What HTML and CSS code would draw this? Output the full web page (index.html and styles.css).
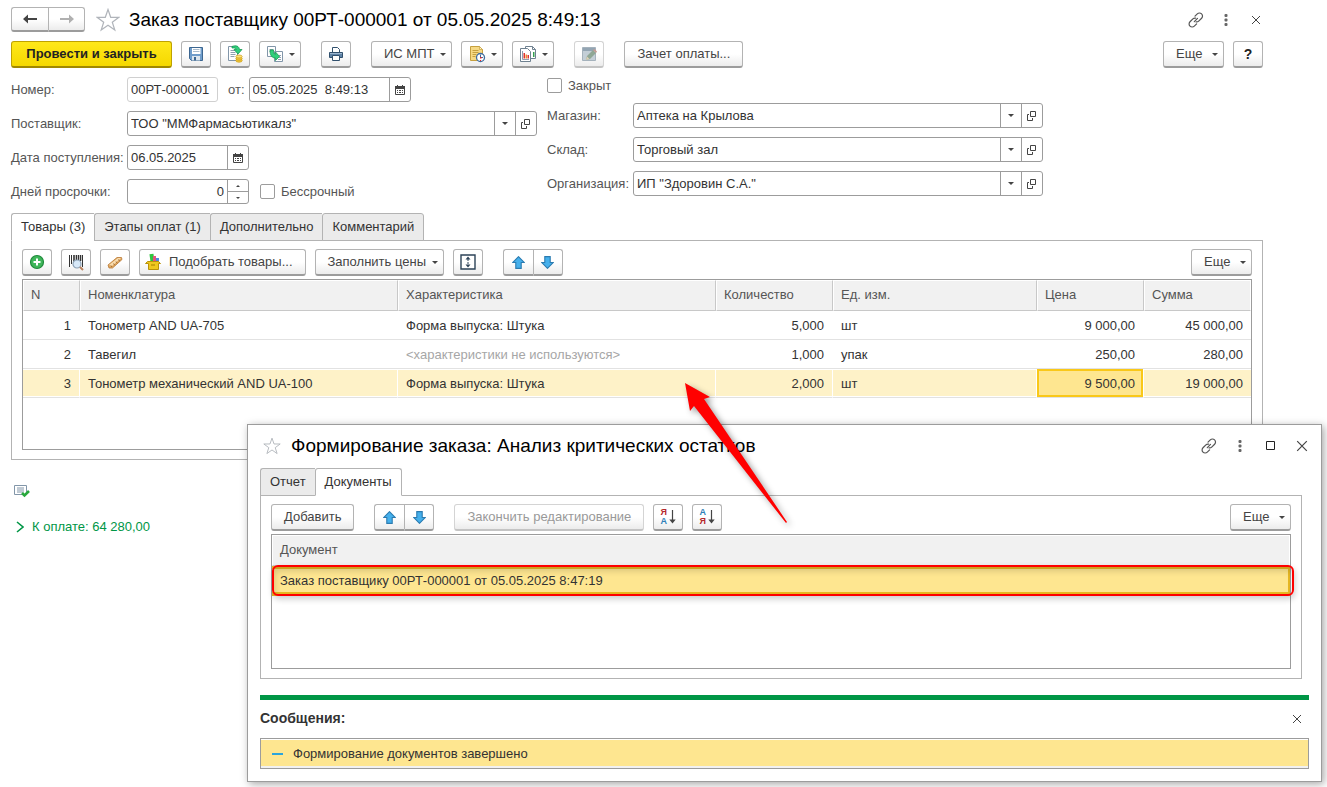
FILE: index.html
```html
<!DOCTYPE html>
<html lang="ru">
<head>
	<meta charset="UTF-8">
	<title>Заказ поставщику</title>
	<link rel="stylesheet" href="styles.css">
</head>
<body>
	<svg class="sprite" aria-hidden="true">
		<symbol id="i-star" viewBox="0 0 24 24"><path d="M12 1.500l2.700 7.800h8.200l-6.600 4.900 2.500 7.900-6.800-4.800-6.800 4.800 2.500-7.900-6.600-4.900h8.200z" fill="#fff" stroke="#b0b4ba" stroke-width="1.200"/></symbol>
		<symbol id="i-link" viewBox="0 0 16 16"><g fill="none" stroke="#555" stroke-width="1.200" stroke-linecap="round"><path d="M7 4.200l2.300-2.300a3 3 0 0 1 4.300 0 3 3 0 0 1 0 4.300l-2.900 2.900a3 3 0 0 1-2.700.8"/><path d="M8.600 11.800l-2.300 2.300a3 3 0 0 1-4.300 0 3 3 0 0 1 0-4.300l2.900-2.900a3 3 0 0 1 2.700-.8"/><path d="M6.300 9.700l3.200-3.300"/></g></symbol>
		<symbol id="i-dots" viewBox="0 0 4 12"><rect x=".5" width="3" height="3" rx="1" fill="#666"/><rect x=".5" y="4.500" width="3" height="3" rx="1" fill="#666"/><rect x=".5" y="9" width="3" height="3" rx="1" fill="#666"/></symbol>
		<symbol id="i-close" viewBox="0 0 10 10"><path d="M1 1l8 8M9 1l-8 8" stroke="#444" fill="none"/></symbol>
		<symbol id="i-cal" viewBox="0 0 10 10"><path d="M.5 1.500h9v8h-9z" fill="#fff" stroke="#444"/><path d="M0 1h10v3H0z" fill="#444"/><path d="M2 0h1v2H2zM7 0h1v2H7z" fill="#444"/><path d="M2 5h1v1H2zM4 5h2v1H4zM7 5h1v1H7zM2 7h1v1H2zM4 7h2v1H4zM7 7h1v1H7z" fill="#444"/></symbol>
		<symbol id="i-open" viewBox="0 0 10 10"><path d="M3.500 .5h5v5h-5z" fill="none" stroke="#444"/><path d="M2 3.500H.5v6h5V7" fill="none" stroke="#444"/></symbol>
		<symbol id="i-up" viewBox="0 0 12 12"><path d="M6 .6L11.400 6H8.500v5.400h-5V6H.6z" fill="#45b0ec" stroke="#2b7bb0"/></symbol>
		<symbol id="i-down" viewBox="0 0 12 12"><path d="M6 11.400L.6 6h2.900V.6h5V6h2.900z" fill="#45b0ec" stroke="#2b7bb0"/></symbol>
	</svg>

	<div class="page">
		<div class="title-bar">
			<div class="pair">
				<button class="btn" aria-label="Назад"><svg width="14" height="10" viewBox="0 0 14 10"><path d="M0 5l5-4.500V4h9v2H5v3.500z" fill="#444"/></svg></button>
				<button class="btn" aria-label="Вперед"><svg width="14" height="10" viewBox="0 0 14 10"><path d="M14 5L9 .5V4H0v2h9v3.500z" fill="#b0b0b0"/></svg></button>
			</div>
			<svg class="star" width="24" height="24"><use href="#i-star"/></svg>
			<h1>Заказ поставщику 00РТ-000001 от 05.05.2025 8:49:13</h1>
			<div class="win-tools">
				<button class="plain" aria-label="Ссылка"><svg width="16" height="16"><use href="#i-link"/></svg></button>
				<button class="plain" aria-label="Меню"><svg width="4" height="12"><use href="#i-dots"/></svg></button>
				<button class="plain" aria-label="Закрыть"><svg width="10" height="10"><use href="#i-close"/></svg></button>
			</div>
		</div>

		<div class="toolbar">
			<button class="btn main">Провести и закрыть</button>
			<button class="btn icon" aria-label="Записать"><svg width="16" height="16" viewBox="0 0 16 16"><path d="M1.500 1.500h13v13h-11l-2-2z" fill="#6f9dcb" stroke="#3c6690"/><path d="M4 2h8.500v6H4z" fill="#fff"/><path d="M5 3.500h6.500M5 5.500h6.500" stroke="#a9bccd"/><path d="M4 10h8v4.500H4z" fill="#dce6ee"/><path d="M6 11h2v3.500H6z" fill="#3c6690"/></svg></button>
			<button class="btn icon" aria-label="Провести"><svg width="18" height="18" viewBox="0 0 18 18"><path d="M2.500 1.500h9v14h-9z" fill="#fff" stroke="#8296a9"/><path d="M4.500 5.500h5M4.500 7.500h5M4.500 9.500h5M4.500 11.500h4" stroke="#8fa0b0"/><path d="M6 1.500c4-1.500 7-.5 7.500 3H16l-4 4.500-4-4.500h2.500C10 3 8.500 2.800 6 3z" fill="#2fcf7b" stroke="#189a53" stroke-width=".8"/><ellipse cx="13" cy="15.500" rx="3.200" ry="1.700" fill="#f2c93f" stroke="#c99a12" stroke-width=".7"/><ellipse cx="13" cy="13.500" rx="3.200" ry="1.700" fill="#f2c93f" stroke="#c99a12" stroke-width=".7"/><ellipse cx="13" cy="11.500" rx="3.200" ry="1.500" fill="#ffe27a" stroke="#c99a12" stroke-width=".7"/></svg></button>
			<button class="btn icon wide" aria-label="Создать на основании"><svg width="18" height="18" viewBox="0 0 18 18"><path d="M1.500 1.500h8v10h-8z" fill="#fff" stroke="#8296a9"/><path d="M3.500 4.500h4M3.500 6.500h2" stroke="#8fa0b0"/><path d="M8.500 6.500h8v10h-8z" fill="#fff" stroke="#8296a9"/><path d="M13 10.500h2M13 12.500h2M12 14.500h3" stroke="#8fa0b0"/><path d="M4 5h3.500c0 3 .5 4 2 4.500V7l4 4.500-4 4V13C6 13 4 10.500 4 5z" fill="#2fcf7b" stroke="#189a53" stroke-width=".8"/></svg><i class="caret"></i></button>
			<span class="space"></span>
			<button class="btn icon" aria-label="Печать"><svg width="16" height="16" viewBox="0 0 16 16"><path d="M4.500 6V1.500h5l2 2V6" fill="#fff" stroke="#31506d"/><path d="M1.500 6.500h13v5h-13z" fill="#5f83a6" stroke="#31506d"/><path d="M2 7h12v1H2z" fill="#9bb6cf"/><path d="M4.500 9.500h7v5h-7z" fill="#fff" stroke="#31506d"/></svg></button>
			<span class="space"></span>
			<button class="btn drop">ИС МПТ<i class="caret"></i></button>
			<button class="btn icon wide" aria-label="Отложить"><svg width="18" height="18" viewBox="0 0 18 18"><path d="M2.500 1.500h9l3 3v11h-12z" fill="#f6d984" stroke="#c6a03f"/><path d="M11.500 1.500v3h3z" fill="#fff3c9" stroke="#c6a03f" stroke-width=".7"/><path d="M4.500 5.500h6M4.500 7.500h6M4.500 9.500h4M4.500 11.500h3" stroke="#c6a03f"/><circle cx="12.500" cy="12.500" r="4" fill="#fff" stroke="#3f6c9e" stroke-width="1.300"/><path d="M12.500 9.500v3h2.500" fill="none" stroke="#3f6c9e"/><path d="M12 12h1.500v1.500H12zM12 15h1v1h-1z" fill="#e22"/></svg><i class="caret"></i></button>
			<button class="btn icon wide" aria-label="Отчеты"><svg width="18" height="18" viewBox="0 0 18 18"><path d="M6.500 1.500h7l3 3v9h-10z" fill="#fff" stroke="#6f8190"/><path d="M13.500 1.500v3h3" fill="none" stroke="#6f8190"/><path d="M14 7h1.500v5H14z" fill="#35a04f"/><path d="M1.500 3.500h7l3 3v10h-10z" fill="#fff" stroke="#6f8190"/><path d="M3.500 6v8.500h6.500" fill="none" stroke="#8fa0b0"/><path d="M4.500 8H6v5.500H4.500zM8.500 10H10v3.500H8.500z" fill="#e0342d"/><path d="M6.500 9.500H8v4H6.500z" fill="#eb8b34"/></svg><i class="caret"></i></button>
			<span class="space"></span>
			<button class="btn icon off" disabled aria-label="Изменить"><svg width="16" height="16" viewBox="0 0 16 16"><path d="M1.500 1.500h13v13h-13z" fill="#c3ced6" stroke="#a5b2bc"/><path d="M2 2h12v3H2z" fill="#93a5b3"/><path d="M5 14l1-4 6-6 3 3-6 6z" fill="#8fa795"/><path d="M12 4l3 3 1-1.500L13.500 3z" fill="#c79a92"/><path d="M5 14l1-3.500L8.500 13z" fill="#ddd0b5"/></svg></button>
			<span class="space"></span>
			<button class="btn">Зачет оплаты...</button>
			<span class="grow"></span>
			<button class="btn drop">Еще<i class="caret"></i></button>
			<button class="btn icon help">?</button>
		</div>

		<div class="fields">
			<div class="col">
				<div class="row">
					<label class="name" for="num">Номер:</label>
					<div class="box num"><input id="num" value="00РТ-000001"></div>
					<label class="from" for="date">от:</label>
					<div class="box date"><input id="date" value="05.05.2025  8:49:13"><button aria-label="Календарь"><svg width="10" height="10"><use href="#i-cal"/></svg></button></div>
				</div>
				<div class="row">
					<label class="name" for="supplier">Поставщик:</label>
					<div class="box full"><select id="supplier"><option>ТОО "ММФармасьютикалз"</option></select><span class="arrow"><i class="caret"></i></span><button aria-label="Открыть"><svg width="10" height="10"><use href="#i-open"/></svg></button></div>
				</div>
				<div class="row">
					<label class="name" for="income">Дата поступления:</label>
					<div class="box short"><input id="income" value="06.05.2025"><button aria-label="Календарь"><svg width="10" height="10"><use href="#i-cal"/></svg></button></div>
				</div>
				<div class="row">
					<label class="name" for="days">Дней просрочки:</label>
					<div class="box short"><input id="days" class="right" type="number" value="0"><div class="spin"><button aria-label="Больше"><i class="caret up"></i></button><button aria-label="Меньше"><i class="caret"></i></button></div></div>
					<label class="check"><input type="checkbox">Бессрочный</label>
				</div>
			</div>
			<div class="col side">
				<label class="check"><input type="checkbox">Закрыт</label>
				<div class="row">
					<label class="name" for="shop">Магазин:</label>
					<div class="box full"><select id="shop"><option>Аптека на Крылова</option></select><span class="arrow"><i class="caret"></i></span><button aria-label="Открыть"><svg width="10" height="10"><use href="#i-open"/></svg></button></div>
				</div>
				<div class="row">
					<label class="name" for="store">Склад:</label>
					<div class="box full"><select id="store"><option>Торговый зал</option></select><span class="arrow"><i class="caret"></i></span><button aria-label="Открыть"><svg width="10" height="10"><use href="#i-open"/></svg></button></div>
				</div>
				<div class="row">
					<label class="name" for="org">Организация:</label>
					<div class="box full"><select id="org"><option>ИП "Здоровин С.А."</option></select><span class="arrow"><i class="caret"></i></span><button aria-label="Открыть"><svg width="10" height="10"><use href="#i-open"/></svg></button></div>
				</div>
			</div>
		</div>

		<div class="tabs">
			<button class="on">Товары (3)</button>
			<button>Этапы оплат (1)</button>
			<button>Дополнительно</button>
			<button>Комментарий</button>
		</div>
		<div class="panel">
			<div class="toolbar">
				<button class="btn icon" aria-label="Добавить"><svg width="16" height="16" viewBox="0 0 16 16"><circle cx="8" cy="8" r="6.500" fill="#3fb65a" stroke="#1f8a3b" stroke-width="1.200"/><path d="M7 4.500h2V7h2.500v2H9v2.500H7V9H4.500V7H7z" fill="#fff"/></svg></button>
				<button class="btn icon" aria-label="Поиск по штрихкоду"><svg width="18" height="18" viewBox="0 0 18 18"><path d="M2.500 2v12M4.500 2v9M11.500 2v5M15.500 2v12" stroke="#333"/><path d="M7 2v8M9.500 2v5M13.500 2v6" stroke="#333" stroke-width="1.600"/><circle cx="10" cy="11" r="4" fill="#d7e8f8" stroke="#8da2b6" stroke-width="1.200"/><path d="M13 14l3 3" stroke="#b9825e" stroke-width="2"/></svg></button>
				<button class="btn icon" aria-label="Терминал"><svg width="18" height="18" viewBox="0 0 18 18"><path d="M2 12L11 4.500h4.500l.5 2L6.500 15H3z" fill="#e0a860" stroke="#b97835" stroke-width=".8"/><path d="M3 12L12 5h3L6 13z" fill="#f9ddb0"/><path d="M5 12.500l1 1.500M7.500 10.500l1.200 1.700M10 8.500l1.200 1.700M12.500 6.500l1.200 1.700" stroke="#8d5a27" stroke-width=".8"/></svg></button>
				<button class="btn"><svg class="before" width="18" height="18" viewBox="0 0 18 18"><path d="M5 1h4v8H5z" fill="#2fc43f" transform="rotate(-8 7 5)"/><path d="M8 3h3v6H8z" fill="#e0547f"/><path d="M11 5h3v4h-3z" fill="#4f87dc"/><path d="M2.500 8.500h11l2 2h-2v6h-10v-6h-3z" fill="#efc81f" stroke="#b99209"/><path d="M6 12h4" stroke="#a27e00"/></svg>Подобрать товары...</button>
				<button class="btn drop">Заполнить цены<i class="caret"></i></button>
				<button class="btn icon" aria-label="Растянуть"><svg width="16" height="16" viewBox="0 0 16 16"><path d="M1 1h14v14H1z" fill="#fff" stroke="#2d4358" stroke-width="1.400"/><path d="M8 2.500L5.500 5.500h5zM8 13.500l-2.500-3h5z" fill="#2d4358"/><path d="M8 5v6" stroke="#2d4358" stroke-dasharray="2 1"/></svg></button>
				<span class="space"></span>
				<div class="pair">
					<button class="btn" aria-label="Вверх"><svg width="13" height="13"><use href="#i-up"/></svg></button>
					<button class="btn" aria-label="Вниз"><svg width="13" height="13"><use href="#i-down"/></svg></button>
				</div>
				<span class="grow"></span>
				<button class="btn drop">Еще<i class="caret"></i></button>
			</div>
			<div class="grid goods">
				<table>
					<colgroup><col class="c-n"><col><col><col class="c-qty"><col class="c-unit"><col class="c-sum"><col class="c-sum"></colgroup>
					<thead>
						<tr><th>N</th><th>Номенклатура</th><th>Характеристика</th><th>Количество</th><th>Ед. изм.</th><th>Цена</th><th>Сумма</th></tr>
					</thead>
					<tbody>
						<tr><td class="right">1</td><td>Тонометр AND UA-705</td><td>Форма выпуска: Штука</td><td class="right">5,000</td><td>шт</td><td class="right">9 000,00</td><td class="right">45 000,00</td></tr>
						<tr><td class="right">2</td><td>Тавегил</td><td class="muted">&lt;характеристики не используются&gt;</td><td class="right">1,000</td><td>упак</td><td class="right">250,00</td><td class="right">280,00</td></tr>
						<tr class="sel"><td class="right">3</td><td>Тонометр механический AND UA-100</td><td>Форма выпуска: Штука</td><td class="right">2,000</td><td>шт</td><td class="right cur">9 500,00</td><td class="right">19 000,00</td></tr>
					</tbody>
				</table>
			</div>
		</div>

		<div class="footer">
			<svg width="16" height="14" viewBox="0 0 16 14"><path d="M.5 1.500h12v9H.5z" fill="#fff" stroke="#8296a9"/><path d="M3 4h7M3 6h7M3 8h7" stroke="#8296a9"/><path d="M8 9l2.500 2.500L15 7" fill="none" stroke="#28a83c" stroke-width="2.600"/></svg>
			<a href="#"><svg width="8" height="12" viewBox="0 0 8 12"><path d="M1 1l6 5-6 5" fill="none" stroke="#009646" stroke-width="1.600"/></svg>К оплате: 64 280,00</a>
		</div>
	</div>

	<div class="window">
		<div class="title-bar">
			<svg class="star" width="18" height="18"><use href="#i-star"/></svg>
			<h2>Формирование заказа: Анализ критических остатков</h2>
			<div class="win-tools">
				<button class="plain" aria-label="Ссылка"><svg width="16" height="16"><use href="#i-link"/></svg></button>
				<button class="plain" aria-label="Меню"><svg width="4" height="12"><use href="#i-dots"/></svg></button>
				<button class="plain" aria-label="Развернуть"><svg width="9" height="9" viewBox="0 0 9 9"><path d="M.5 .5h8v8h-8z" fill="none" stroke="#222"/></svg></button>
				<button class="plain" aria-label="Закрыть"><svg width="12" height="12"><use href="#i-close"/></svg></button>
			</div>
		</div>
		<div class="tabs">
			<button>Отчет</button>
			<button class="on">Документы</button>
		</div>
		<div class="panel">
			<div class="toolbar">
				<button class="btn">Добавить</button>
				<span class="space"></span>
				<div class="pair">
					<button class="btn" aria-label="Вверх"><svg width="13" height="13"><use href="#i-up"/></svg></button>
					<button class="btn" aria-label="Вниз"><svg width="13" height="13"><use href="#i-down"/></svg></button>
				</div>
				<span class="space"></span>
				<button class="btn off" disabled>Закончить редактирование</button>
				<button class="btn icon" aria-label="По убыванию"><span class="letters"><b class="red">Я</b><b class="blue">А</b></span><svg width="7" height="14" viewBox="0 0 7 14"><path d="M3.500 0v11" stroke="#444" stroke-width="1.200"/><path d="M.3 9.500h6.400L3.500 13.500z" fill="#444"/></svg></button>
				<button class="btn icon" aria-label="По возрастанию"><span class="letters"><b class="blue">А</b><b class="red">Я</b></span><svg width="7" height="14" viewBox="0 0 7 14"><path d="M3.500 0v11" stroke="#444" stroke-width="1.200"/><path d="M.3 9.500h6.400L3.500 13.500z" fill="#444"/></svg></button>
				<span class="grow"></span>
				<button class="btn drop">Еще<i class="caret"></i></button>
			</div>
			<div class="grid docs">
				<table>
					<thead><tr><th>Документ</th></tr></thead>
					<tbody><tr><td class="doc">Заказ поставщику 00РТ-000001 от 05.05.2025 8:47:19<span class="mark"></span></td></tr></tbody>
				</table>
			</div>
		</div>
		<div class="messages">
			<div class="head"><b>Сообщения:</b><button class="plain" aria-label="Закрыть"><svg width="10" height="10"><use href="#i-close"/></svg></button></div>
			<div class="msg">Формирование документов завершено</div>
		</div>
	</div>

	<svg class="pointer" width="120" height="160" viewBox="0 0 120 160"><path d="M5 3l25 14-6 2 83 123-1 1L14 26l-4 5z" fill="#f00"/></svg>
</body>
</html>
```
FILE: styles.css
```css
*{
	box-sizing:border-box;
	margin:0;
	padding:0;
}
body{
	position:relative;
	min-height:100vh;
	font:13px/16px "Liberation Sans", Arial, sans-serif;
	color:#333;
	background:#fff;
}
button,input,select{
	font:inherit;
	color:inherit;
	border:0;
	background:none;
}
svg{
	flex:none;
}
.sprite{
	position:absolute;
	width:0;
	height:0;
}
.page{
	padding:7px 64px 0 11px;
}

/* title */
.title-bar{
	display:flex;
	align-items:center;
	height:25px;
}
.title-bar .star{
	margin:0 9px 0 11px;
}
h1,h2{
	font-size:19px;
	line-height:24px;
	font-weight:normal;
	color:#000;
}
.win-tools{
	display:flex;
	align-items:center;
	margin-left:auto;
}
.plain{
	display:flex;
	align-items:center;
	justify-content:center;
	width:30px;
	height:20px;
}
.page .win-tools{
	margin-right:-8px;
}

/* buttons */
.toolbar{
	display:flex;
	gap:9px;
	margin-top:9px;
}
.space{
	width:2px;
}
.grow{
	flex:1;
}
.btn{
	display:flex;
	align-items:center;
	justify-content:center;
	height:27px;
	padding:0 12px;
	border:1px solid #b3b3b3;
	border-bottom:2px solid #9c9c9c;
	border-radius:3px;
	background:linear-gradient(#fff 50%,#ececec);
	color:#444;
	white-space:nowrap;
}
.main{
	min-width:161px;
	border-color:#bfa200;
	border-bottom-color:#a08800;
	background:linear-gradient(#ffe81a,#f5d800);
	font-weight:bold;
	color:#222;
}
.icon{
	width:30px;
	padding:0;
}
.wide{
	width:42px;
	gap:5px;
}
.drop{
	justify-content:space-between;
	min-width:61px;
	padding:0 5px 0 12px;
	gap:6px;
}
.help{
	font-size:14px;
	font-weight:bold;
	color:#222;
}
.off{
	color:#999;
	border-color:#d4d4d4;
	border-bottom-color:#c4c4c4;
}
.before{
	margin:0 6px 0 -7px;
}
.caret{
	width:0;
	border:3px solid transparent;
	border-top-color:#444;
	border-bottom:0;
}
.caret.up{
	transform:rotate(180deg);
}
.pair{
	display:flex;
}
.pair .btn{
	width:30px;
	padding:0;
}
.pair .btn:first-child{
	border-right:0;
	border-radius:3px 0 0 3px;
}
.pair .btn:last-child{
	border-radius:0 3px 3px 0;
}
.title-bar .pair .btn{
	width:37px;
	height:25px;
}
.letters{
	display:flex;
	flex-direction:column;
	margin-right:2px;
	font-size:9px;
	line-height:9px;
}
.red{color:#b5282d;}
.blue{color:#2f7fb8;}

/* fields */
.fields{
	display:flex;
	gap:10px;
	margin-top:9px;
}
.col{
	display:flex;
	flex-direction:column;
	gap:9px;
	width:526px;
}
.side{
	width:496px;
}
.row{
	display:flex;
	align-items:center;
	height:25px;
}
.name{
	width:116px;
	color:#555;
	white-space:nowrap;
}
.side .name{
	width:86px;
}
.from{
	padding:0 4px 0 10px;
	color:#555;
}
.box{
	display:flex;
	height:25px;
	border:1px solid #9c9c9c;
	border-radius:3px;
}
.box input,.box select{
	flex:1;
	width:0;
	padding:0 3px;
	appearance:none;
	white-space:pre;
	outline:0;
}
.box input[type=number]{
	appearance:textfield;
}
.box input::-webkit-inner-spin-button{
	display:none;
}
.right{
	text-align:right;
}
.box button,.arrow{
	display:flex;
	align-items:center;
	justify-content:center;
	width:21px;
	border-left:1px solid #9c9c9c;
}
.arrow{
	pointer-events:none;
}
.num{
	width:91px;
	border-color:#d0d0d0;
}
.date{
	width:162px;
}
.full{
	flex:1;
}
.short{
	width:122px;
}
.spin{
	display:flex;
	flex-direction:column;
}
.spin button{
	flex:1;
}
.spin button+button{
	border-top:1px solid #9c9c9c;
}
.spin .caret{
	border-width:2px;
	border-bottom:0;
}
.check{
	display:flex;
	align-items:center;
	gap:6px;
	height:17px;
	color:#555;
}
.row .check{
	margin-left:11px;
}
.check input{
	appearance:none;
	width:15px;
	height:15px;
	border:1px solid #9c9c9c;
	border-radius:2px;
	background:#fff;
}

/* tabs */
.tabs{
	display:flex;
	margin:9px 0 -1px;
	position:relative;
}
.tabs button{
	height:28px;
	padding:0 9px;
	border:1px solid #b3b3b3;
	border-right:0;
	border-radius:3px 0 0 0;
	background:#ebebeb;
}
.tabs button:last-child{
	border-right:1px solid #b3b3b3;
	border-radius:3px 3px 0 0;
}
.tabs .on,
.tabs .on:last-child{
	border-bottom-color:#fff;
	background:#fff;
}
.panel{
	padding:8px 10px 9px;
	border:1px solid #b3b3b3;
}
.panel .toolbar{
	margin:0 0 3px;
}

/* tables */
.grid{
	border:1px solid #9c9c9c;
}
.goods{
	min-height:171px;
}
.docs{
	min-height:135px;
}
table{
	width:100%;
	table-layout:fixed;
	border-spacing:0;
}
.c-n{width:57px;}
.c-qty{width:117px;}
.c-unit{width:204px;}
.c-sum{width:107px;}
th{
	height:31px;
	padding:0 7px 2px;
	border:1px solid #fff;
	border-right-color:#c8c8c8;
	border-bottom-color:#c8c8c8;
	background:#f1f1f1;
	font-weight:normal;
	text-align:left;
	color:#555;
}
th:last-child{
	border-right-color:#fff;
}
td{
	height:29px;
	padding:2px 8px 0;
	border-bottom:1px solid #e2e2e2;
	white-space:nowrap;
}
td.right{
	padding-right:9px;
}
td:last-child{
	padding-right:8px;
}
.sel td{
	background:#fef2c8;
	border-right:1px solid #fff;
	box-shadow:inset 0 1px #fff, inset 0 -1px #fff;
}
.sel td.right{
	padding-right:8px;
}
.sel td:last-child{
	border-right:0;
}
.muted{
	color:#a6a6a6;
}
.sel .cur{
	background:#fee690;
	box-shadow:inset 0 0 0 2px #f9c819;
}
.doc{
	position:relative;
	height:30px;
	padding:0 8px;
	border-bottom:0;
	background:#fee690;
	box-shadow:inset -2px 0 #e8b923, inset 0 -4px #e8b923, inset 0 3px #e8b923;
}
/* red frame round the current document */
.mark{
	position:absolute;
	top:-1px;
	right:-4px;
	bottom:0;
	left:0;
	border:2px solid #f00;
	border-radius:6px;
	box-shadow:1px 3px 6px rgba(0,0,0,.2), inset 1px 4px 6px rgba(0,0,0,.15);
}

/* below the table */
.footer{
	display:flex;
	flex-direction:column;
	gap:21px;
	padding:24px 3px;
}
.footer a{
	display:flex;
	align-items:center;
	gap:8px;
	padding-left:2px;
	color:#009646;
	text-decoration:none;
}

/* second window */
.window{
	position:absolute;
	top:424px;
	left:247px;
	right:5px;
	padding:8px 12px 12px;
	border:1px solid #9c9c9c;
	background:#fff;
	box-shadow:2px 2px 8px rgba(0,0,0,.35);
}
.window .star{
	margin:0 10px 0 3px;
}
.window .win-tools{
	margin-right:-8px;
}
.window .win-tools .plain{
	width:31px;
}
.window .tabs{
	margin-top:10px;
}
.window .panel{
	margin-right:7px;
}
.messages{
	margin-top:16px;
	border-top:5px solid #009646;
}
.head{
	display:flex;
	justify-content:space-between;
	align-items:center;
	height:38px;
}
.head .plain{
	width:24px;
}
.head b{
	padding-bottom:3px;
	font-size:14px;
}
.msg{
	display:flex;
	align-items:center;
	gap:10px;
	height:31px;
	padding:0 11px;
	border:1px solid #9c9c9c;
	background:#fee690;
	box-shadow:inset 0 1px #fff, inset 0 -2px #f1f1f1;
}
.msg::before{
	content:"";
	width:11px;
	height:2px;
	background:#2ba5dc;
}

/* arrow over both windows */
.pointer{
	position:absolute;
	top:380px;
	left:680px;
	filter:drop-shadow(3px 3px 3px rgba(0,0,0,.4));
	pointer-events:none;
}
```
